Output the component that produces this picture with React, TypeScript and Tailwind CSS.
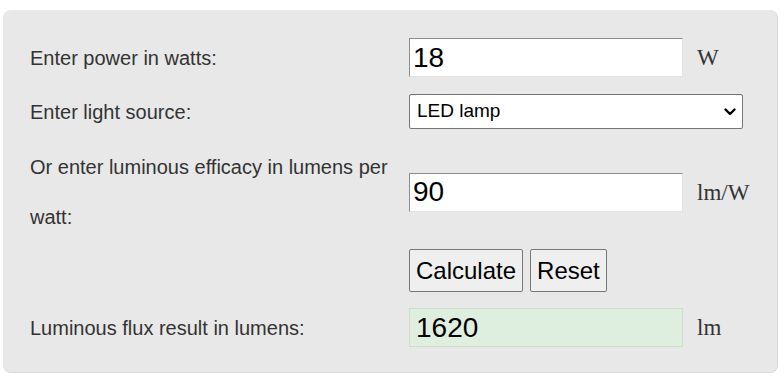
import React from "react";

const inputCls =
  "w-[274px] h-[39px] bg-white border border-solid border-t-[#8d8d8d] border-l-[#8d8d8d] border-r-[#e2e2e2] border-b-[#e2e2e2] px-[3px] text-[28px] text-black outline-none font-['Liberation_Sans',Arial,sans-serif]";

const unitCls = "text-[23px] text-[#333] font-['Liberation_Serif','Times_New_Roman',serif] leading-none";

const labelCls = "text-[20px] text-[#333] font-['Liberation_Sans',Arial,sans-serif]";

export default function App() {
  return (
    <div className="w-[784px] h-[379px] bg-white pt-[10px] pl-[3px]">
      <div className="w-[775px] h-[363px] rounded-[8px] bg-[#e8e8e8] border-r border-b border-[#d9d9d9] pl-[27px] pt-[28px] flex flex-col">
        <div className="grid grid-cols-[379px_288px_1fr] items-center h-[39px]">
          <div className={labelCls}>Enter power in watts:</div>
          <input className={inputCls} defaultValue="18" />
          <div className={unitCls}>W</div>
        </div>

        <div className="grid grid-cols-[379px_288px_1fr] items-center h-[35px] mt-[17px]">
          <div className={labelCls}>Enter light source:</div>
          <div className="relative w-[334px] h-[35px]">
            <select
              defaultValue="led"
              className="appearance-none w-[334px] h-[35px] bg-white border border-[#767676] rounded-[2px] pl-[7px] text-[19px] text-black outline-none font-['Liberation_Sans',Arial,sans-serif]"
            >
              <option value="led">LED lamp</option>
              <option value="cfl">Fluorescent lamp</option>
              <option value="inc">Incandescent lamp</option>
            </select>
            <svg
              className="absolute right-[7px] top-[14px] pointer-events-none"
              width="12"
              height="8"
              viewBox="0 0 12 8"
            >
              <path d="M1.5 1.5 L6 6 L10.5 1.5" fill="none" stroke="#000" strokeWidth="2.4" strokeLinecap="round" strokeLinejoin="round" />
            </svg>
          </div>
          <div />
        </div>

        <div className="grid grid-cols-[379px_288px_1fr] items-center h-[100px] mt-[13px]">
          <div className={labelCls + " leading-[50px] w-[370px]"}>
            Or enter luminous efficacy in lumens per watt:
          </div>
          <input className={inputCls} defaultValue="90" />
          <div className={unitCls}>lm/W</div>
        </div>

        <div className="grid grid-cols-[379px_288px_1fr] items-center h-[43px] mt-[7px]">
          <div />
          <div className="flex gap-[7px]">
            <button className="h-[43px] px-[6px] bg-[#efefef] border border-[#767676] rounded-[2px] text-[24px] text-black font-['Liberation_Sans',Arial,sans-serif]">
              Calculate
            </button>
            <button className="h-[43px] px-[6px] bg-[#efefef] border border-[#767676] rounded-[2px] text-[24px] text-black font-['Liberation_Sans',Arial,sans-serif]">
              Reset
            </button>
          </div>
          <div />
        </div>

        <div className="grid grid-cols-[379px_288px_1fr] items-center h-[39px] mt-[16px]">
          <div className={labelCls}>Luminous flux result in lumens:</div>
          <input
            readOnly
            className="w-[274px] h-[39px] bg-[#dfefdf] border border-[#cfdccf] px-[6px] text-[28px] text-black outline-none font-['Liberation_Sans',Arial,sans-serif]"
            defaultValue="1620"
          />
          <div className={unitCls}>lm</div>
        </div>
      </div>
    </div>
  );
}
